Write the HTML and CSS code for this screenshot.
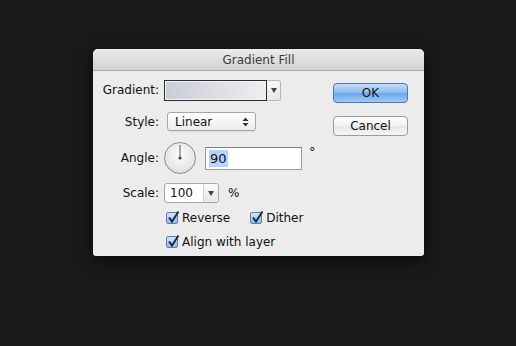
FILE: index.html
```html
<!DOCTYPE html>
<html lang="en">
<head>
    <meta charset="UTF-8">
    <title>Gradient Fill</title>
    <link rel="stylesheet" href="styles.css">
</head>
<body>
    <div class="dialog">
        <div class="titlebar">Gradient Fill</div>
        <div class="content">
            <div class="form">
                <div class="row row-gradient">
                    <label class="label">Gradient:</label>
                    <div class="swatch"></div>
                    <div class="swatch-arrow"><span class="tri"></span></div>
                </div>
                <div class="row row-style">
                    <label class="label">Style:</label>
                    <div class="popup">
                        <span>Linear</span>
                        <svg class="updown" width="7" height="10" viewBox="0 0 7 10">
                            <path d="M3.5 0.5 L6.5 4 H0.5 Z M3.5 9.5 L6.5 6 H0.5 Z" fill="#333"/>
                        </svg>
                    </div>
                </div>
                <div class="row row-angle">
                    <label class="label">Angle:</label>
                    <div class="dial">
                        <svg width="32" height="32" viewBox="0 0 32 32">
                            <line x1="16" y1="16" x2="16" y2="3" stroke="#555" stroke-width="1"/>
                            <circle cx="16" cy="16" r="1.6" fill="#444"/>
                        </svg>
                    </div>
                    <div class="field"><span class="sel">90</span></div>
                    <span class="unit deg">°</span>
                </div>
                <div class="row row-scale">
                    <label class="label">Scale:</label>
                    <div class="combo">
                        <span class="combo-val">100</span>
                        <span class="combo-arrow"><span class="tri"></span></span>
                    </div>
                    <span class="unit">%</span>
                </div>
                <div class="row row-check">
                    <span class="check"><svg width="15" height="15" viewBox="0 0 15 15"><path d="M3 7.5 L6 11.5 L12.5 1.5" fill="none" stroke="#1d2a44" stroke-width="2"/></svg></span>
                    <span class="check-label">Reverse</span>
                    <span class="check check-gap"><svg width="15" height="15" viewBox="0 0 15 15"><path d="M3 7.5 L6 11.5 L12.5 1.5" fill="none" stroke="#1d2a44" stroke-width="2"/></svg></span>
                    <span class="check-label">Dither</span>
                </div>
                <div class="row row-check row-last">
                    <span class="check"><svg width="15" height="15" viewBox="0 0 15 15"><path d="M3 7.5 L6 11.5 L12.5 1.5" fill="none" stroke="#1d2a44" stroke-width="2"/></svg></span>
                    <span class="check-label">Align with layer</span>
                </div>
            </div>
            <div class="buttons">
                <button class="btn btn-ok">OK</button>
                <button class="btn btn-cancel">Cancel</button>
            </div>
        </div>
    </div>
</body>
</html>
```

FILE: styles.css
```css
* { margin: 0; padding: 0; box-sizing: border-box; }
body { background: #191919; width: 516px; height: 346px; padding: 49px 0 0 93px; font-family: 'DejaVu Sans', sans-serif; font-size: 12px; color: #111; overflow: hidden; }

.dialog {
    width: 331px; height: 207px; background: #ececec;
    border-radius: 5px 5px 3px 3px; overflow: hidden;
    box-shadow: 0 4px 14px rgba(0, 0, 0, 0.6);
}
.titlebar {
    height: 22px; line-height: 22px; text-align: center; font-size: 12px; color: #3c3c3c;
    background: linear-gradient(#ebebeb, #d2d2d2); border-bottom: 1px solid #a8a8a8;
}

.content { display: flex; justify-content: space-between; }
.form { padding-top: 8px; }
.row { display: flex; align-items: center; }
.label { width: 71px; padding-right: 5px; text-align: right; }

.row-gradient { height: 22px; }
.swatch {
    width: 103px; height: 21px; border: 1px solid #2a2a2a;
    background: linear-gradient(to right, #c9cdd9, #eeeef1);
    box-shadow: inset 0 0 0 1px #f4f4f4;
}
.swatch-arrow {
    width: 14px; height: 21px; background: linear-gradient(#fafafa, #e6e6e6);
    border: 1px solid #b8b8b8; border-left: none; border-radius: 0 3px 3px 0;
    display: flex; align-items: center; justify-content: center;
}
.tri { width: 0; height: 0; border-left: 3px solid transparent; border-right: 3px solid transparent; border-top: 5px solid #444; }

.row-style { height: 19px; margin-top: 11px; }
.popup {
    margin-left: 3px; width: 89px; height: 19px; padding: 0 6px 0 7px;
    border: 1px solid #a6a6a6; border-radius: 3px;
    background: linear-gradient(#ffffff, #ececec);
    display: flex; align-items: center; justify-content: space-between;
    box-shadow: 0 1px 0 rgba(0, 0, 0, 0.06);
}

.row-angle { height: 32px; margin-top: 11px; }
.dial {
    width: 32px; height: 32px; border-radius: 50%; border: 1px solid #8c8c8c;
    background: radial-gradient(circle at 50% 40%, #ffffff, #e0e0e0 75%, #cfcfcf);
}
.dial svg { display: block; margin: -1px; }
.field {
    margin-left: 9px; width: 97px; height: 23px; background: #fff;
    border: 1px solid #9b9b9b; border-top-color: #7e7e7e;
    display: flex; align-items: center; padding-left: 3px; font-size: 13px;
}
.sel { background: #b5d5fd; padding: 0 1px; line-height: 17px; }
.unit { margin-left: 7px; }
.deg { align-self: flex-start; margin-top: 2px; font-size: 13px; }

.row-scale { height: 20px; margin-top: 9px; }
.combo {
    width: 55px; height: 20px; display: flex; background: #fff;
    border: 1px solid #a6a6a6; border-radius: 3px;
}
.combo-val { flex: 1; padding-left: 5px; line-height: 18px; }
.combo-arrow {
    width: 15px; display: flex; align-items: center; justify-content: center;
    background: linear-gradient(#fafafa, #e8e8e8); border-left: 1px solid #d0d0d0; border-radius: 0 3px 3px 0;
}
.row-scale .unit { margin-left: 9px; }

.row-check { height: 16px; margin-top: 7px; padding-left: 73px; }
.row-last { margin-top: 8px; }
.check {
    width: 12px; height: 12px; border-radius: 2px; border: 1px solid #5c7ea8;
    background: linear-gradient(#d4e6fb, #8fb9ee); position: relative;
}
.check svg { position: absolute; left: -1px; top: -3px; }
.check-label { margin-left: 4px; }
.check-gap { margin-left: 20px; }

.buttons { display: flex; flex-direction: column; gap: 13px; padding: 12px 16px 0 0; }
.btn {
    width: 75px; height: 20px; border-radius: 4px; font-family: 'DejaVu Sans', sans-serif;
    font-size: 12px; color: #111; cursor: pointer;
}
.btn-ok { background: linear-gradient(#c3dcf8, #8cbcf0 50%, #6aa6ec 51%, #9ccaf8); border: 1px solid #4f76ad; }
.btn-cancel { background: linear-gradient(#ffffff, #f0f0f0 50%, #e6e6e6 51%, #f6f6f6); border: 1px solid #9a9a9a; }
```
